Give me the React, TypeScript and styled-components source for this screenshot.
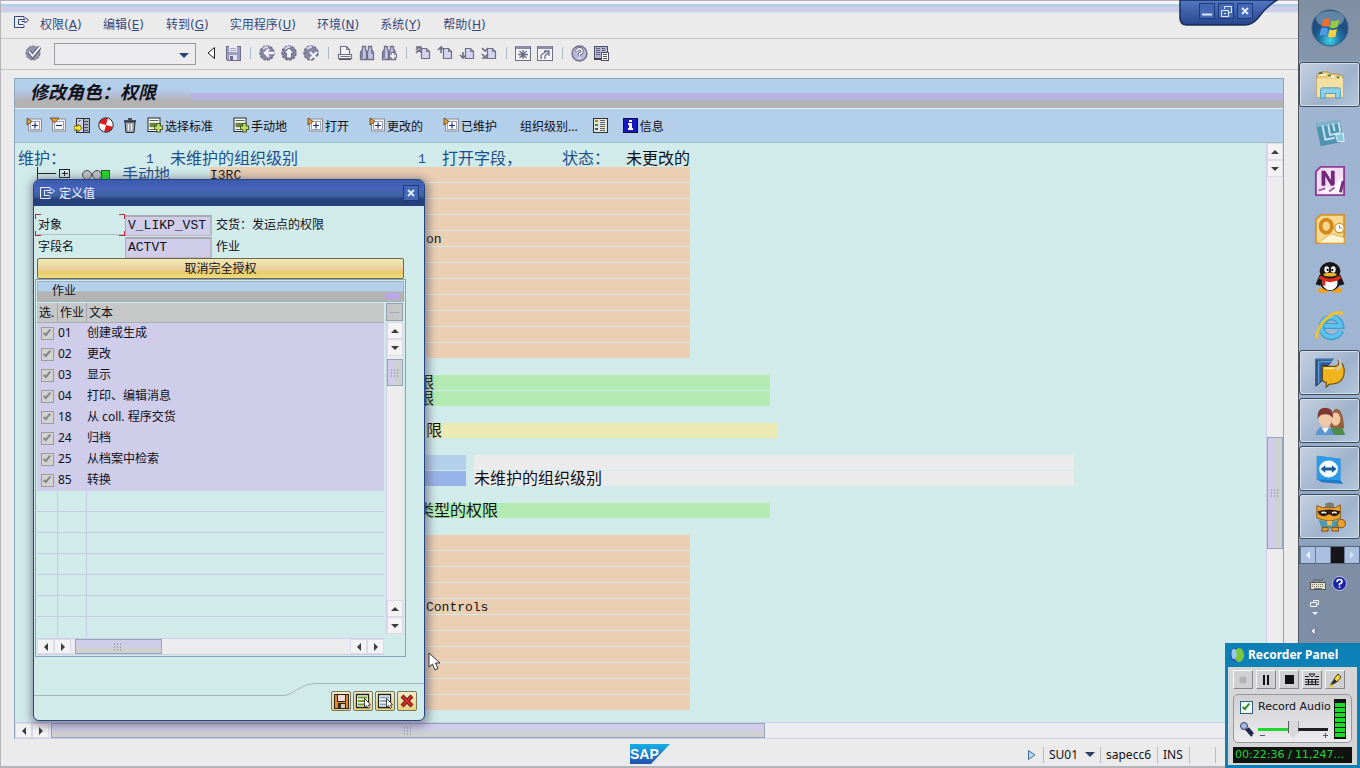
import React from 'react';
import styled, { createGlobalStyle, css } from 'styled-components';

const GlobalStyle = createGlobalStyle`
  *, *::before, *::after { box-sizing: border-box; }
  body {
    margin: 0;
    background: #ebebeb;
    color: #101018;
    font: 12px/16px 'Noto Sans', 'Noto Sans CJK SC', sans-serif;
  }
  button, input, select { font: inherit; color: inherit; margin: 0; }
  button { border: 0; padding: 0; background: none; cursor: default; }
  svg { display: block; flex: none; }
`;

/* ---------- frame ---------- */

const Desktop = styled.div`
  position: relative;
  display: flex;
  min-height: 100vh;
  overflow: hidden;
`;

const Main = styled.main`
  position: relative;
  flex: 1;
  min-width: 0;
  display: flex;
  flex-direction: column;
  background: #ebebeb;
  border-left: 1px solid #b4b4b8;
  border-right: 1px solid #50565e;
  border-bottom: 2px solid #b4b4b8;
`;

const TopStrip = styled.div`
  height: 13px;
  background: linear-gradient(
    #b0b0b6 0 1px, #f4f4f6 1px 4px, #b4cfe8 4px 7px, #cfcde8 7px 12px, #cdeaea 12px 13px
  );
`;

const MenuBar = styled.nav`
  display: flex;
  align-items: center;
  height: 26px;
  padding: 0 0 6px 13px;
  border-bottom: 1px solid #c4c4c6;
  font-family: 'DejaVu Sans', 'Noto Sans CJK SC', sans-serif;
  color: #33497f;
`;

const MenuItems = styled.div`
  display: flex;
  gap: 21px;
  margin: 4px 0 0 10px;
`;

const MenuButton = styled.button`
  min-width: 42px;
  text-align: left;
  white-space: nowrap;
`;

const SystemBar = styled.div`
  display: flex;
  align-items: center;
  height: 31px;
  padding: 0 0 2px 21px;
  border-bottom: 1px solid #c4c4c6;
`;

const IconButton = styled.button<{ $w?: number }>`
  display: flex;
  justify-content: center;
  align-items: center;
  width: ${(p) => p.$w ?? 22}px;
  height: 22px;
`;

const Divider = styled.span`
  width: 12px;
  height: 12px;
  background: linear-gradient(#a9bac6, #a9bac6) center / 1px 100% no-repeat;
`;

const CommandBox = styled.div`
  display: flex;
  width: 142px;
  height: 22px;
  margin: 2px 4px 0 10px;
  border: 1px solid #9a9a9c;
  background: #ececee;
  input { flex: 1; min-width: 0; border: 0; background: none; }
`;

/* ---------- work area ---------- */

const Work = styled.section`
  flex: 1;
  display: flex;
  flex-direction: column;
  margin: 8px 14px 0 13px;
  border: 1px solid #8fa3ba;
  border-bottom: 0;
`;

const Title = styled.h1`
  margin: 0;
  height: 30px;
  padding-left: 15px;
  font-size: 18px;
  line-height: 26px;
  font-weight: 700;
  font-style: italic;
  border-bottom: 1px solid #dff0f4;
  background:
    linear-gradient(#b3d0ea 0 10px, #b6bcd8 16px, #b3b3b3 21px) left / 176px 100% no-repeat,
    linear-gradient(#b3d0ea 0 14px, #b8b2e2 14px 21px, #b3b3b3 21px);
`;

const AppBar = styled.div`
  display: flex;
  align-items: center;
  height: 34px;
  padding: 0 0 2px 7px;
  background: #b3cfea;
  border-bottom: 1px solid #9fc0c4;
`;

const Labelled = styled.div`
  display: flex;
  gap: 20px;
  margin-left: 5px;
`;

const TextButton = styled.button`
  display: flex;
  align-items: center;
  gap: 2px;
  height: 22px;
  white-space: nowrap;
  span { padding-top: 4px; }
  span:only-child { padding-left: 3px; }
`;

const Body = styled.div`
  flex: 1;
  display: flex;
  background: #d0ebea;
`;

const List = styled.div`
  flex: 1;
  min-width: 0;
  padding: 8px 0 11px 3px;
  overflow: hidden;
`;

const Line = styled.div`
  display: flex;
  height: 16px;
`;

/* One list cell; widths and starts count half-width columns of 8px. */
const Cell = styled.span<{ $skip?: number; $cols: number; $bg?: string; $blue?: boolean }>`
  flex: none;
  height: 15px;
  margin-left: ${(p) => (p.$skip ?? 0) * 8}px;
  width: ${(p) => p.$cols * 8}px;
  background: ${(p) => p.$bg ?? 'transparent'};
  color: ${(p) => (p.$blue ? '#1f4f8c' : '#101018')};
  font: 16px/13px 'Noto Sans CJK SC', sans-serif;
  white-space: pre;
`;

const Mono = styled.span`
  font: 13px/17px 'Liberation Mono', monospace;
  display: block;
`;

/* ---------- scroll bars ---------- */

const Bar = styled.div<{ $vertical?: boolean }>`
  display: flex;
  flex-direction: ${(p) => (p.$vertical ? 'column' : 'row')};
  ${(p) => (p.$vertical ? 'width: 17px;' : 'height: 17px;')}
  background: #ececee;
  border: solid #cfcde8;
  border-width: ${(p) => (p.$vertical ? '0 0 0 1px' : '1px 0 1px 0')};
`;

const ArrowButton = styled.button`
  flex: none;
  display: flex;
  align-items: center;
  justify-content: center;
  width: 17px;
  height: 17px;
  max-width: 100%;
  max-height: 100%;
  background: #f3f3f4;
  border: 1px solid #dcdae8;
`;

const Thumb = styled.div<{ $vertical?: boolean; $size: number }>`
  flex: none;
  display: flex;
  align-items: center;
  justify-content: center;
  border: 1px solid #93a5b8;
  ${(p) =>
    p.$vertical
      ? css`height: ${p.$size}px; background: linear-gradient(90deg, #cfcdea 0 45%, #d0d0d0 60%);`
      : css`width: ${p.$size}px; background: linear-gradient(#cfcdea 0 45%, #d0d0d0 70%);`}
`;

const Space = styled.div<{ $size?: number }>`
  ${(p) => (p.$size === undefined ? 'flex: 1;' : `flex: 0 0 ${p.$size}px;`)}
`;

/* ---------- status bar ---------- */

const StatusBar = styled.footer`
  display: grid;
  grid-template-columns: 1fr auto 1fr;
  align-items: center;
  height: 27px;
  padding-top: 2px;
`;

const StatusRight = styled.div`
  display: flex;
  justify-content: flex-end;
  align-items: center;
  padding: 2px 57px 0 0;
`;

const StatusCell = styled.div<{ $w: number }>`
  display: flex;
  align-items: center;
  justify-content: space-between;
  width: ${(p) => p.$w}px;
  height: 16px;
  padding: 0 5px;
  border-left: 1px solid #bcbcc0;
`;

/* ---------- window controls ---------- */

const WindowTab = styled.div`
  position: absolute;
  top: 0;
  right: 19px;
  width: 100px;
  height: 28px;
`;

const WindowButtons = styled.div`
  position: absolute;
  top: 3px;
  left: 20px;
  display: flex;
  gap: 3px;
`;

const WindowButton = styled.button`
  display: flex;
  align-items: center;
  justify-content: center;
  width: 16px;
  height: 16px;
  border: 1px solid #1d3a7c;
  background: #4468b4;
`;

/* ---------- dialog ---------- */

const Dialog = styled.section`
  position: absolute;
  left: 32px;
  top: 179px;
  width: 392px;
  background: #d0ebea;
  border: 1px solid #26457f;
  border-radius: 7px 7px 6px 6px;
  box-shadow: 1px 2px 8px 3px rgba(90, 84, 110, 0.6);
`;

const DialogTitle = styled.header`
  display: flex;
  align-items: center;
  gap: 3px;
  height: 26px;
  padding: 0 5px 0 6px;
  border-radius: 5px 5px 0 0;
  background: linear-gradient(#3a5cae, #4863bb 35%, #3d63a0 60%, #26407e 75%);
  color: #f2f5fc;
  h2 { flex: 1; margin: 0; padding-top: 2px; font-size: 12px; font-weight: 400; }
`;

const Fields = styled.div`
  padding: 8px 0 0 1px;
`;

const FieldRow = styled.div`
  display: flex;
  align-items: center;
  height: 22px;
  input {
    width: 87px;
    height: 21px;
    margin-right: 4px;
    padding: 0 2px;
    border: 2px solid;
    border-color: #a9a9b4 #b8b6c6 #b8b6c6 #a9a9b4;
    border-width: 2px 2px 1px 1px;
    background: #cfcde9;
    font: 13px/17px 'Liberation Mono', monospace;
  }
`;

const FieldLabel = styled.label<{ $active?: boolean }>`
  width: 90px;
  height: 22px;
  padding: 2px 0 0 3px;
  line-height: 18px;
  ${(p) =>
    p.$active &&
    css`
      background:
        linear-gradient(#b22a34, #b22a34) 0 0 / 6px 1px, linear-gradient(#b22a34, #b22a34) 0 0 / 1px 5px,
        linear-gradient(#b22a34, #b22a34) 100% 0 / 6px 1px, linear-gradient(#b22a34, #b22a34) 100% 0 / 1px 5px,
        linear-gradient(#b22a34, #b22a34) 0 100% / 6px 1px, linear-gradient(#b22a34, #b22a34) 0 100% / 1px 5px,
        linear-gradient(#b22a34, #b22a34) 100% 100% / 6px 1px, linear-gradient(#b22a34, #b22a34) 100% 100% / 1px 5px,
        linear-gradient(#b4c0c4, #b4c0c4) 0 95% / 100% 1px;
      background-repeat: no-repeat;
    `}
`;

const WideButton = styled.button`
  display: block;
  width: calc(100% - 23px);
  height: 21px;
  margin-left: 3px;
  border: 1px solid #6c6650;
  border-radius: 2px;
  background: linear-gradient(#f0e9b0, #ecdba4 35%, #eccfa4 50%, #e8cc68 70%, #eedc82);
  line-height: 20px;
`;

const Group = styled.div`
  margin: 0 18px 0 1px;
  padding: 1px;
  border: 1px solid #86a4bf;
`;

const GroupTitle = styled.h3`
  margin: 0 0 1px;
  height: 21px;
  padding-left: 14px;
  border: 1px solid #9db0c6;
  font-size: 12px;
  font-weight: 400;
  line-height: 18px;
  background:
    linear-gradient(#b8a8ea, #b8a8ea) right 3px bottom 2px / 14px 6px no-repeat,
    linear-gradient(#b3cfea 0 9px, #b3b3b3 10px);
`;

const GridRow = styled.div`
  display: flex;
  gap: 2px;
`;

const Grid = styled.table`
  flex: 1;
  border-spacing: 0;
  table-layout: fixed;
  th, td { height: 21px; padding: 0; font-weight: 400; text-align: left; white-space: nowrap; }
  th { height: 20px; padding-left: 2px; background: #c6c8c8; border-bottom: 1px solid #a9acb2; }
  th + th { border-left: 1px solid #a4a4b0; }
  tbody td { border-bottom: 1px solid #c9cbe4; }
  tbody td + td { border-left: 1px solid #c9cbe4; }
  tbody tr:last-child td { border-bottom-color: transparent; }
  tbody tr.filled td { background: #cfcde9; border-color: #cfcde9; }
`;

const Tick = styled.input.attrs({ type: 'checkbox' })<{ $live?: boolean }>`
  appearance: none;
  display: block;
  flex: none;
  width: 13px;
  height: 13px;
  border: 1px solid ${(p) => (p.$live ? '#2c5f84' : '#9a9aa0')};
  background-color: ${(p) => (p.$live ? '#f4f6f0' : '#d2d2ce')};
  position: relative;
  &:checked::after {
    content: '';
    position: absolute;
    left: 3px;
    top: 0;
    width: 4px;
    height: 8px;
    border: solid ${(p) => (p.$live ? '#2f8a2c' : '#84848c')};
    border-width: 0 2px 2px 0;
    transform: rotate(40deg);
  }
`;

const TickCell = styled.td`
  input { margin-left: 4px; }
`;

const Corner = styled.button`
  height: 18px;
  margin-bottom: 1px;
  border: 1px solid #9a9ab0;
  background: linear-gradient(#a8a8b4, #a8a8b4) center / 9px 1px no-repeat #c6c8c8;
`;

const SideBar = styled.div`
  display: flex;
  flex-direction: column;
  width: 17px;
  margin-right: 1px;
  padding-bottom: 4px;
  > :last-child { flex: 1; }
`;

const GroupFoot = styled.div`
  padding-right: 20px;
`;

const DialogFooter = styled.footer`
  display: flex;
  height: 37px;
  margin-top: 26px;
`;

const FootLine = styled.div`
  flex: 1;
  height: 13px;
  border-bottom: 1px solid #a9b4ba;
`;

const FootActions = styled.div`
  display: flex;
  gap: 2px;
  padding: 7px 7px 0 16px;
  border-top: 1px solid #a9b4ba;
`;

const GoldButton = styled.button`
  display: flex;
  align-items: center;
  justify-content: center;
  width: 20px;
  height: 20px;
  border: 1px solid #77765e;
  border-radius: 2px;
  background: linear-gradient(#f3ecc4, #e8d27c);
`;

const Pointer = styled.svg`
  position: absolute;
  left: 427px;
  top: 652px;
`;

/* ---------- task bar ---------- */

const TaskBar = styled.aside`
  display: flex;
  flex-direction: column;
  width: 61px;
  background: linear-gradient(#7f8fa4 0, #8496ac 61px, #9fb4d0 62px, #a0b5d1 340px, #90a4c0 540px, #7e8ea4 566px);
`;

const StartSlot = styled.div`
  display: flex;
  justify-content: center;
  align-items: flex-start;
  height: 62px;
  padding-top: 9px;
`;

const TaskButton = styled.button<{ $open?: boolean }>`
  display: flex;
  align-items: center;
  justify-content: center;
  height: 45px;
  margin-bottom: 3px;
  border: 1px solid transparent;
  border-radius: 3px;
  ${(p) =>
    p.$open &&
    css`
      border-color: #3c4c60;
      box-shadow: inset 0 0 0 1px #d5e0ec;
      background: linear-gradient(135deg, #c4d0e0, #9fb2cc 60%, #b4c8dc);
    `}
`;

const Pager = styled.div`
  display: flex;
  height: 18px;
  margin: 4px 0 12px;
  border: 1px solid #566478;
  background: #a9c0e0;
`;

const PagerCell = styled.button<{ $dark?: boolean }>`
  flex: 1;
  display: flex;
  align-items: center;
  justify-content: center;
  border-left: 1px solid #6c7a90;
  background: ${(p) => (p.$dark ? '#15151a' : 'transparent')};
`;

const Tray = styled.div`
  display: flex;
  flex-direction: column;
  gap: 8px;
  padding-left: 11px;
  > div { display: flex; align-items: center; gap: 6px; }
`;

/* ---------- recorder ---------- */

const Recorder = styled.section`
  position: absolute;
  right: 0;
  bottom: 0;
  width: 135px;
  padding: 0 3px 3px;
  background: #0d80b6;
  h2 {
    display: flex;
    align-items: center;
    gap: 2px;
    height: 24px;
    margin: 0;
    padding-left: 1px;
    color: #fff;
    font: 700 12px/24px 'Noto Sans', sans-serif;
    white-space: nowrap;
  }
`;

const RecorderBody = styled.div`
  padding: 3px 5px 2px;
  background: #d6d6d8;
  font-family: 'DejaVu Sans', sans-serif;
  font-size: 11px;
`;

const RecorderButtons = styled.div`
  display: flex;
  gap: 3px;
  button {
    display: flex;
    align-items: center;
    justify-content: center;
    width: 20px;
    height: 19px;
    border: 1px solid;
    border-color: #f6f6f8 #88888c #88888c #f6f6f8;
    background: #d0d0d2;
  }
`;

const AudioBox = styled.div`
  display: flex;
  justify-content: space-between;
  height: 49px;
  margin: 5px 0 4px;
  padding: 4px 5px 4px 6px;
  border: 1px solid #98989c;
  border-radius: 5px;
  background: linear-gradient(#d0d0d2, #ececee);
`;

const AudioLeft = styled.div`
  display: flex;
  flex-direction: column;
  gap: 6px;
  label { display: flex; align-items: center; gap: 5px; height: 16px; white-space: nowrap; }
  div { display: flex; align-items: center; gap: 4px; }
`;

const Volume = styled.input.attrs({ type: 'range' })`
  appearance: none;
  width: 70px;
  height: 17px;
  background:
    linear-gradient(90deg, #1fd62c 50%, #202024 50%) center / 100% 3px no-repeat,
    linear-gradient(#55555a, #55555a) 2px 14px / 5px 1px no-repeat,
    linear-gradient(#55555a, #55555a) 65px 14px / 5px 1px no-repeat,
    linear-gradient(#55555a, #55555a) 67px 12px / 1px 5px no-repeat;
  &::-webkit-slider-thumb {
    appearance: none;
    width: 11px;
    height: 17px;
    background: linear-gradient(90deg, #5c5c60 0 1px, #d8d8dc 1px 10px, #5c5c60 10px);
    clip-path: polygon(0 0, 100% 0, 100% 65%, 50% 100%, 0 65%);
  }
`;

const Meter = styled.div`
  width: 12px;
  height: 40px;
  border: 1px solid #101010;
  background: repeating-linear-gradient(#101010 0 1px, #18dc28 1px 5px);
  border-top-width: 3px;
`;

const Clock = styled.output`
  display: block;
  height: 16px;
  padding-left: 2px;
  overflow: hidden;
  background: #101210;
  color: #22d43a;
  line-height: 16px;
  white-space: nowrap;
`;

/* ---------- icons ---------- */

const Tri = ({ dir, size = 4, fill = '#3c3c44' }: { dir: 'up' | 'down' | 'left' | 'right'; size?: number; fill?: string }) => {
  const s = size;
  const shape = {
    up: { w: s * 2, h: s, d: `M0 ${s}L${s} 0L${s * 2} ${s}Z` },
    down: { w: s * 2, h: s, d: `M0 0L${s} ${s}L${s * 2} 0Z` },
    left: { w: s, h: s * 2, d: `M${s} 0L0 ${s}L${s} ${s * 2}Z` },
    right: { w: s, h: s * 2, d: `M0 0L${s} ${s}L0 ${s * 2}Z` },
  }[dir];
  return (
    <svg width={shape.w} height={shape.h}>
      <path d={shape.d} fill={fill} />
    </svg>
  );
};

const Grip = () => (
  <svg width="9" height="8" fill="#a4a4b8">
    {[0, 3, 6].map((x) => [0, 3, 6].map((y) => <rect key={`${x}${y}`} x={x} y={y} width="1" height="2" />))}
  </svg>
);

const MenuGlyph = ({ color = '#2f4478' }) => (
  <svg width="16" height="13" fill="none" stroke={color}>
    <path d="M10 2.500V.5H.5V11.500H10V9.500M4.500 3.500H11M11 1.500L14.500 4L11 7V5.500H7.500M4.500 3.500V8.500H9.500" />
  </svg>
);

const ink = '#6f6f88';
const tint = '#c3c3e4';

const Svg = ({ children, size = 16, sharp }: { children: React.ReactNode; size?: number; sharp?: boolean }) => (
  <svg width={size} height={size} viewBox="0 0 16 16" shapeRendering={sharp ? 'crispEdges' : undefined} fill="none">
    {children}
  </svg>
);

const Disc = ({ children }: { children: React.ReactNode }) => (
  <Svg>
    <circle cx="8" cy="8" r="7" fill="#8686a4" stroke={ink} strokeWidth="1.4" strokeDasharray="3 1" />
    <path d="M4 4A6 6 0 0 1 9 2" stroke="#d4d4ee" strokeWidth="2" />
    {children}
  </Svg>
);

const Binoculars = ({ plus }: { plus?: boolean }) => (
  <Svg>
    <path d="M3.500 1.500H6.500V4L7.500 7.500V14.500H1.500V7.500L3.500 4ZM9.500 1.500H12.500V4L14.500 7.500V14.500H8.500V7.500L9.500 4Z" fill={tint} stroke={ink} strokeWidth="1.3" />
    <path d="M7 6.500H9M3 5V13M13 5V9" stroke={ink} strokeWidth="1.500" />
    {plus && <path d="M12 7V15M8 11H16" stroke={ink} strokeWidth="4" />}
    {plus && <path d="M12 8V14M9 11H15" stroke="#ededfa" strokeWidth="2.400" />}
  </Svg>
);

const PageIcon = ({ d }: { d: string }) => (
  <Svg>
    <path d="M6.500 3.500H11.500L14.500 6.500V13.500H6.500Z" fill="#d4d4f0" stroke={ink} strokeWidth="1.2" />
    <path d="M11.500 3.500V6.500H14.500" stroke={ink} />
    <path d={d} stroke={ink} strokeWidth="1.600" />
  </Svg>
);

const WindowIcon = ({ d }: { d: string }) => (
  <Svg sharp>
    <rect x="0.500" y="1.500" width="15" height="14" fill="#f4f4f8" stroke={ink} />
    <rect x="1" y="1" width="14" height="3" fill="#8c8ca6" />
    <path d={d} stroke={ink} strokeWidth="1.300" shapeRendering="auto" />
  </Svg>
);

const CheckIcon = () => (
  <Svg>
    <circle cx="8" cy="8" r="7" fill="#9494b0" stroke={ink} strokeDasharray="3 1" />
    <path d="M4 6.500L7.500 11L15 2" stroke="#55556c" strokeWidth="4" />
    <path d="M4 6.500L7.500 11L15 2" stroke="#f0f0fa" strokeWidth="2" />
  </Svg>
);

const SaveGrey = () => (
  <Svg sharp>
    <path d="M1 1H15V15H2L1 14Z" fill="#9c9cc4" stroke={ink} />
    <rect x="4" y="1" width="8" height="6" fill="#ececf6" />
    <path d="M5 3H11M5 5H11" stroke="#a4a4bc" />
    <rect x="4" y="10" width="8" height="5" fill="#e2e2ee" />
    <rect x="5" y="11" width="3" height="4" fill={ink} />
  </Svg>
);

const PrintIcon = () => (
  <Svg>
    <path d="M3.500 9V1.500H9.500L12.500 4.500V9" fill="#f2f2f8" stroke={ink} strokeWidth="1.200" />
    <path d="M9.500 1.500V4.500H12.500" stroke={ink} />
    <path d="M1.500 9.500H14.500V13.500H1.500ZM3.500 11.500H13" fill="#f2f2f8" stroke={ink} strokeWidth="1.200" />
    <path d="M2 14.500H14" stroke="#4e4e60" />
  </Svg>
);

const HelpIcon = () => (
  <Svg size={17}>
    <circle cx="8" cy="8" r="7" fill="#b8b8dc" stroke={ink} strokeWidth="1.300" />
    <path d="M5.500 6Q5.500 3.500 8 3.500T10.500 6Q10.500 7.500 8 8.500V10" stroke="#4c4c6c" strokeWidth="2.600" />
    <path d="M5.500 6Q5.500 3.500 8 3.500T10.500 6Q10.500 7.500 8 8.500V10M8 11.500V13" stroke="#fff" strokeWidth="1.400" />
  </Svg>
);

const LayoutIcon = () => (
  <Svg sharp>
    <rect x="1" y="1" width="13" height="12" fill="#b4b4d4" stroke="#505064" />
    <path d="M3 3H7M3 5H7M3 7H7M3 9H7M9 3H12M9 5H12" stroke="#5c5c78" />
    <path d="M1 13.500H9" stroke="#404050" strokeWidth="2" />
    <rect x="8" y="7" width="7" height="8" fill="#fff" stroke="#505064" />
    <path d="M10 9.500H14M10 11.500H14M10 13.500H14" stroke="#505064" />
  </Svg>
);

const NodeIcon = ({ collapse }: { collapse?: boolean }) => (
  <Svg>
    <rect x="2.500" y="2" width="13" height="12" fill="#f2f2f4" stroke="#8c8c90" />
    <rect x="4.500" y="4.500" width="9" height="8" fill="#fff" stroke="#98a0c0" />
    <path d={collapse ? 'M6 8.500H12' : 'M6 8.500H12M9 5.500V11.500'} stroke="#22307c" strokeWidth="1.200" />
    <path d={collapse ? 'M0 1H9L4.500 6Z' : 'M1 1V8L6 4.500Z'} fill="#f09a2c" stroke="#50402c" strokeWidth=".8" />
  </Svg>
);

const InsertIcon = () => (
  <Svg sharp>
    <rect x="2" y="1" width="13" height="14" fill="#cfd6e2" stroke="#2c3038" />
    <rect x="9" y="1" width="6" height="14" fill="#a7afc0" stroke="#2c3038" />
    <path d="M10 4H14M10 7H14M10 10H14M10 13H14" stroke="#4c525c" />
    <path d="M4 5L7 3M4 8H7" stroke="#707888" />
    <path d="M0 9H4V7L8 11L4 15V13H0Z" fill="#f4e33c" stroke="#6c6418" shapeRendering="auto" />
  </Svg>
);

const BallIcon = () => (
  <Svg>
    <circle cx="8" cy="8" r="7.200" fill="#fff" />
    <path d="M8 8V1A7 7 0 0 0 1 8ZM8 8V15A7 7 0 0 0 15 8Z" fill="#e01820" transform="rotate(15 8 8)" />
    <circle cx="8" cy="8" r="7.200" stroke="#30262a" />
  </Svg>
);

const TrashIcon = () => (
  <Svg>
    <path d="M3 5H13L12 15.500H4Z" fill="#a4a8b0" stroke="#202428" />
    <path d="M6.500 7V13.500M9.500 7V13.500" stroke="#e8eaec" strokeWidth="1.200" />
    <path d="M2 4H14M6 2H10" stroke="#202428" strokeWidth="1.600" />
  </Svg>
);

const ListPlus = () => (
  <Svg>
    <rect x="1" y="1" width="12" height="13.500" fill="#fff" stroke="#202820" />
    <path d="M2.500 3.500H11.500M2.500 12.500H8" stroke="#586858" />
    <path d="M2.500 8H11.500" stroke="#66843a" strokeWidth="4.500" />
    <path d="M11.500 6V15.500M7 10.700H16" stroke="#4a5c20" strokeWidth="4.400" />
    <path d="M11.500 7V14.500M8 10.700H15" stroke="#c2e070" strokeWidth="2.400" />
  </Svg>
);

const LegendIcon = () => (
  <Svg sharp>
    <rect x="1" y="1" width="14" height="14" fill="#e4e6dc" stroke="#303030" />
    <path d="M3 4H6" stroke="#a88c30" strokeWidth="2" />
    <path d="M3 8H6" stroke="#3c8c3c" strokeWidth="2" />
    <path d="M3 12H6" stroke="#50545c" strokeWidth="2" />
    <path d="M8 3.500H13M8 5.500H13M8 7.500H13M8 9.500H13M8 11.500H13M8 13.500H13" stroke="#606468" />
  </Svg>
);

const InfoIcon = () => (
  <Svg sharp>
    <rect x="1" y="1" width="14" height="14" fill="#1818c0" stroke="#101030" />
    <path d="M7 3H10V5H7ZM6 6H10V11H11V13H6V11H7V8H6Z" fill="#fff" />
  </Svg>
);

const DiskIcon = () => (
  <Svg sharp>
    <path d="M1 1H15V15H1Z" fill="#e08c28" stroke="#302418" />
    <rect x="4" y="1" width="8" height="7" fill="#f0dcdc" stroke="#302418" />
    <rect x="5" y="10" width="7" height="5" fill="#d8c8c8" stroke="#302418" />
    <rect x="6" y="11" width="2" height="4" fill="#402c28" />
  </Svg>
);

const PickIcon = ({ color }: { color: string }) => (
  <Svg>
    <path d="M1.500 1.500H13.500V14.500H1.500Z" fill="#fff" stroke="#202420" strokeWidth="1.300" />
    <path d="M3 4.500H12M3 8H12M3 11.500H10" stroke={color} strokeWidth="2" />
    <path d="M9.500 5.500V14L11.500 12.500L13 15.500L14.500 14.500L13.500 12L15.500 11.500Z" fill="#fff" stroke="#202020" strokeWidth=".8" />
  </Svg>
);

const CancelIcon = () => (
  <Svg>
    <path d="M3 3L13 13M13 3L3 13" stroke="#5c1414" strokeWidth="4" />
    <path d="M3.500 3.500L12.500 12.500M12.500 3.500L3.500 12.500" stroke="#dc2c2c" strokeWidth="2.200" />
  </Svg>
);

const TreeMark = () => (
  <svg width="96" height="16" fill="none" stroke="#202028" shapeRendering="crispEdges">
    <path d="M19.500 0V16M19.500 6.500H38M41.500 2.500H51.500V10.500H41.500ZM44 6.500H50M46.500 4V9" />
    <g shapeRendering="auto" stroke="#44484c">
      <circle cx="69" cy="8" r="4.500" fill="#c0c4c4" />
      <circle cx="79" cy="8" r="4.500" fill="#c0c4c4" />
      <rect x="83.500" y="3.500" width="8" height="9" fill="#18e020" />
    </g>
  </svg>
);

const SapLogo = () => (
  <svg width="40" height="20">
    <defs>
      <linearGradient id="sap" x2="0" y2="1">
        <stop offset="0" stopColor="#12b0e4" />
        <stop offset="1" stopColor="#2450b0" />
      </linearGradient>
    </defs>
    <path d="M0 0H40L21 20H0Z" fill="url(#sap)" />
    <text x="0" y="15" fill="#fff" fontFamily="Liberation Sans" fontWeight="700" fontSize="14">SAP</text>
  </svg>
);

const StartOrb = () => (
  <svg width="38" height="38" viewBox="0 0 38 38">
    <defs>
      <radialGradient id="orb" cy=".85">
        <stop offset="0" stopColor="#3fd6e6" />
        <stop offset=".55" stopColor="#2277a8" />
        <stop offset="1" stopColor="#1f4f80" />
      </radialGradient>
    </defs>
    <circle cx="19" cy="19" r="18" fill="url(#orb)" stroke="#3a5f80" />
    <ellipse cx="19" cy="10" rx="14" ry="8" fill="#fff" opacity=".3" />
    <path d="M12 11Q16 8 19 10.500L17.500 18Q14 16 10.500 18Z" fill="#ee6c2c" />
    <path d="M20.500 11.500Q24 13 28.500 10.500L26.500 18Q22.500 20 19 18.500Z" fill="#98cc3c" />
    <path d="M10 19.500Q14 17.500 17 20L15.500 27Q12 25 8.500 27Z" fill="#4c9ce8" />
    <path d="M18.500 20.500Q22 22 26 20L24.500 27.500Q20.500 29.500 17 27.500Z" fill="#fcd03c" />
  </svg>
);

const Task = ({ children }: { children: React.ReactNode }) => (
  <svg width="32" height="32" viewBox="0 0 34 34" fill="none">{children}</svg>
);

const FolderArt = () => (
  <Task>
    <path d="M3 6L8 3H15L17 5H24L31 8V30H3Z" fill="#e4c878" stroke="#b4944c" />
    <path d="M5 6H13M15 8H22M23 9H29" stroke="#fff8e0" strokeWidth="2" />
    <path d="M5 5L9 4M15 7H18M24 9H27" stroke="#5c6434" strokeWidth="2" />
    <rect x="3" y="10" width="28" height="20" fill="#f4e0a0" />
    <path d="M7 31V22Q7 20 9 20H26Q28 20 28 22V31H23V26H12V31Z" fill="#8ed0ec" stroke="#4a9cc4" />
  </Task>
);

const LyncArt = () => (
  <Task>
    <path d="M2 7L27 3L32 26L7 31Z" fill="#4f93b0" />
    <path d="M2 7L27 3L28 7L3 11Z" fill="#7fb4c8" />
    <path d="M9 9L12 24L22 22M15 8L17 19L28 17M20 7L22 15M26 6L28 16" stroke="#c4e6f0" strokeWidth="2" />
    <path d="M23 19L31 17L32 26L25 26Z" fill="#8ac8dc" stroke="#e0f4f8" />
  </Task>
);

const OneNoteArt = () => (
  <Task>
    <path d="M7 2H32V32H2V7Z" fill="#f4dcf4" stroke="#8c3c94" strokeWidth="2" />
    <path d="M8 22V6H12L18 16V6H22V22H18L12 12V22Z" fill="#702878" />
    <path d="M19 24L30 12V30H8L7 25Z" fill="#fff" opacity=".8" />
    <path d="M28 29L31 17" stroke="#702878" strokeWidth="3" />
    <path d="M5 27L12 25M16 28L22 24" stroke="#a45cac" strokeWidth="2" />
  </Task>
);

const OutlookArt = () => (
  <Task>
    <path d="M7 2H32V32H2V7Z" fill="#f6d890" stroke="#d09428" strokeWidth="2" />
    <ellipse cx="13" cy="14" rx="6" ry="7" stroke="#d48818" strokeWidth="4" />
    <circle cx="27" cy="16" r="5" fill="#fff" stroke="#d09c30" strokeWidth="1.500" />
    <path d="M27 13V16H30" stroke="#a87820" />
    <path d="M5 31L18 22L32 26V32H5Z" fill="#fff4d0" stroke="#e0ac48" />
  </Task>
);

const QQArt = () => (
  <Task>
    <ellipse cx="10" cy="31" rx="6" ry="3" fill="#f0a020" />
    <ellipse cx="24" cy="31" rx="6" ry="3" fill="#f0a020" />
    <path d="M7 15L3 24L6 25ZM27 15L31 24L28 25Z" fill="#181818" stroke="#181818" strokeWidth="2" />
    <ellipse cx="17" cy="21" rx="11" ry="11" fill="#181818" />
    <ellipse cx="17" cy="23" rx="8" ry="8" fill="#fff" />
    <ellipse cx="17" cy="11" rx="11" ry="10" fill="#181818" />
    <ellipse cx="13.500" cy="9" rx="2.500" ry="3.500" fill="#fff" />
    <ellipse cx="20.500" cy="9" rx="2.500" ry="3.500" fill="#fff" />
    <circle cx="14.500" cy="9.500" r="1.200" fill="#000" />
    <circle cx="19.500" cy="9.500" r="1.200" fill="#000" />
    <ellipse cx="17" cy="14.500" rx="7" ry="2" fill="#f4b428" />
    <path d="M6 17Q17 24 28 17" stroke="#d82c20" strokeWidth="4" />
    <path d="M9 19V26H12V20" fill="#d82c20" />
  </Task>
);

const IEArt = () => (
  <Task>
    <path d="M29 23Q26 30 18 30A10.500 10.500 0 1 1 29 18H11" stroke="#3e9cd0" strokeWidth="6.500" />
    <path d="M28.500 23Q26 29.500 18 29.500A10.500 10.500 0 1 1 28.500 18H11" stroke="#5cc4ec" strokeWidth="4" />
    <path d="M4 31C1 28 6 16 15 9S30 3 30 6" stroke="#f0c030" strokeWidth="3" />
  </Task>
);

const SapArt = () => (
  <Task>
    <path d="M2 2H21L15 9H9V25L2 31Z" fill="#2e5f9c" stroke="#1c3048" />
    <path d="M2 2H21L19 5H5V28" stroke="#7cb0e0" />
    <path d="M9 10H22Q28 9 26 4Q33 8 32 17Q31 29 16 29L13 32V27Q10 27 9 24Z" fill="#f0b41c" stroke="#6c4c10" strokeWidth="1.200" />
    <path d="M11 12H22" stroke="#fce48c" strokeWidth="2" />
    <path d="M24 14Q31 9 27 3" stroke="#c8ccd0" strokeWidth="2.400" />
  </Task>
);

const PeopleArt = () => (
  <Task>
    <path d="M16 32Q17 22 24 22T33 32Z" fill="#4c8c50" />
    <path d="M17 24Q18 4 24 4Q31 5 32 25Z" fill="#98603c" />
    <ellipse cx="23" cy="15" rx="5" ry="7" fill="#f0c8a4" />
    <path d="M2 32Q3 23 11 23T21 32Z" fill="#5c94cc" />
    <path d="M8 24L12 30L16 24Z" fill="#fff" />
    <ellipse cx="12" cy="15" rx="7" ry="9" fill="#f0c8a8" />
    <path d="M4 15Q3 3 12 3T20 14Q17 9 10 10Q6 10 4 15Z" fill="#7c3830" />
  </Task>
);

const TeamViewerArt = () => (
  <Task>
    <path d="M3 3L28 6V29L31 33L8 31L3 28Z" fill="#1c7cc8" />
    <path d="M3 3L28 6V29L3 28Z" fill="#2c9ae4" />
    <ellipse cx="15.500" cy="17" rx="10" ry="9" fill="#f4fafe" />
    <path d="M7 17L12 13V15.500H19V13L24 17L19 21V18.500H12V21Z" fill="#1c5c98" />
  </Task>
);

const CatArt = () => (
  <Task>
    <path d="M12 3Q17 0 21 3V7H12Z" fill="#787c70" />
    <path d="M3 5L9 7H23L28 4V18Q17 24 3 18Z" fill="#f0a428" stroke="#8c5414" />
    <path d="M4 11Q16 7 28 11Q26 17 20 16L16 14L12 16Q5 17 4 11Z" fill="#2c1c14" />
    <path d="M8 13Q10 11 13 13M19 13Q22 11 24 13" stroke="#fff" strokeWidth="1.500" />
    <path d="M5 20Q16 24 28 20L26 29H8Z" fill="#4c98ac" />
    <circle cx="29" cy="24" r="4.500" fill="#e8a02c" stroke="#7c4c18" />
    <path d="M9 28H15V32H8ZM19 28H26V32H19Z" fill="#e49c2c" stroke="#7c4c18" />
    <path d="M14 21H19V26H14Z" fill="#f4c048" />
  </Task>
);

/* ---------- data ---------- */

const menus: [string, string][] = [
  ['权限', 'A'], ['编辑', 'E'], ['转到', 'G'], ['实用程序', 'U'], ['环境', 'N'], ['系统', 'Y'], ['帮助', 'H'],
];

const activities: [string, string][] = [
  ['01', '创建或生成'], ['02', '更改'], ['03', '显示'], ['04', '打印、编辑消息'],
  ['18', '从 coll. 程序交货'], ['24', '归档'], ['25', '从档案中检索'], ['85', '转换'],
];

const PEACH = '#eacfb2';
const GREEN = '#b3ebb3';

const Peach = ({ count, at, text }: { count: number; at?: number; text?: string }) => (
  <>
    {Array.from({ length: count }, (_, i) => (
      <Line key={i}>
        <Cell $skip={24} $cols={27} $bg={PEACH} />
        <Cell $cols={33} $bg={PEACH}>{i === at && <Mono>{text}</Mono>}</Cell>
      </Line>
    ))}
  </>
);

const Arrow = ({ dir, label }: { dir: 'up' | 'down' | 'left' | 'right'; label: string }) => (
  <ArrowButton aria-label={label}><Tri dir={dir} /></ArrowButton>
);

const AuthList = () => (
  <List>
    <Line>
      <Cell $cols={16} $blue>维护：</Cell>
      <Cell $cols={3} $blue><Mono>1</Mono></Cell>
      <Cell $cols={31} $blue>未维护的组织级别</Cell>
      <Cell $cols={3} $blue><Mono>1</Mono></Cell>
      <Cell $cols={15} $blue>打开字段，</Cell>
      <Cell $cols={8} $blue>状态：</Cell>
      <Cell $cols={8}>未更改的</Cell>
    </Line>
    <Line>
      <Cell $cols={13}><TreeMark /></Cell>
      <Cell $cols={11} $blue>手动地</Cell>
      <Cell $cols={60} $bg={PEACH}><Mono>I3RC</Mono></Cell>
    </Line>
    <Peach count={11} at={3} text="on" />
    <Line />
    <Line><Cell $skip={24} $cols={26} $bg={GREEN} /><Cell $cols={44} $bg={GREEN}>限</Cell></Line>
    <Line><Cell $skip={24} $cols={26} $bg={GREEN} /><Cell $cols={44} $bg={GREEN}>限</Cell></Line>
    <Line />
    <Line><Cell $skip={24} $cols={27} $bg="#eaeab2" /><Cell $cols={44} $bg="#eaeab2">限</Cell></Line>
    <Line />
    <Line><Cell $skip={24} $cols={32} $bg="#b3cfea" /><Cell $skip={1} $cols={75} $bg="#ebebeb" /></Line>
    <Line><Cell $skip={24} $cols={32} $bg="#98b2ea" /><Cell $skip={1} $cols={75} $bg="#ebebeb">未维护的组织级别</Cell></Line>
    <Line />
    <Line><Cell $skip={24} $cols={26} $bg={GREEN} /><Cell $cols={44} $bg={GREEN}>类型的权限</Cell></Line>
    <Line />
    <Peach count={11} at={4} text="Controls" />
  </List>
);

const DefineValues = () => (
  <Dialog role="dialog" aria-labelledby="dialog-title">
    <DialogTitle>
      <MenuGlyph color="#e8eefa" />
      <h2 id="dialog-title">定义值</h2>
      <WindowButton aria-label="关闭">
        <svg width="8" height="8" stroke="#dfe9f8" strokeWidth="2"><path d="M1 1L7 7M7 1L1 7" /></svg>
      </WindowButton>
    </DialogTitle>
    <Fields>
      <FieldRow>
        <FieldLabel htmlFor="object" $active>对象</FieldLabel>
        <input id="object" defaultValue="V_LIKP_VST" />
        <span>交货：发运点的权限</span>
      </FieldRow>
      <FieldRow>
        <FieldLabel htmlFor="field">字段名</FieldLabel>
        <input id="field" defaultValue="ACTVT" />
        <span>作业</span>
      </FieldRow>
    </Fields>
    <WideButton>取消完全授权</WideButton>
    <Group>
      <GroupTitle>作业</GroupTitle>
      <GridRow>
        <Grid>
          <colgroup><col width="20" /><col width="29" /><col /></colgroup>
          <thead><tr><th>选.</th><th>作业</th><th>文本</th></tr></thead>
          <tbody>
            {activities.map(([code, text]) => (
              <tr className="filled" key={code}>
                <TickCell><Tick defaultChecked aria-label={text} /></TickCell>
                <td>{code}</td>
                <td>{text}</td>
              </tr>
            ))}
            {Array.from({ length: 7 }, (_, i) => <tr key={i}><td /><td /><td /></tr>)}
          </tbody>
        </Grid>
        <SideBar>
          <Corner aria-label="表格设置" />
          <Bar $vertical>
            <Arrow dir="up" label="上" />
            <Arrow dir="down" label="下" />
            <Space $size={3} />
            <Thumb $vertical $size={27}><Grip /></Thumb>
            <Space />
            <Arrow dir="up" label="上页" />
            <Arrow dir="down" label="下页" />
          </Bar>
        </SideBar>
      </GridRow>
      <GroupFoot>
        <Bar>
          <Arrow dir="left" label="左" />
          <Arrow dir="right" label="右" />
          <Space $size={4} />
          <Thumb $size={87}><Grip /></Thumb>
          <Space />
          <Arrow dir="left" label="左页" />
          <Arrow dir="right" label="右页" />
        </Bar>
      </GroupFoot>
    </Group>
    <DialogFooter>
      <FootLine />
      <svg width="32" height="14" fill="none" stroke="#a9b4ba"><path d="M0 12.500C10 12.500 18 .5 32 .5" /></svg>
      <FootActions>
        <GoldButton aria-label="保存"><DiskIcon /></GoldButton>
        <GoldButton aria-label="全选"><PickIcon color="#6a9a24" /></GoldButton>
        <GoldButton aria-label="取消全选"><PickIcon color="#8fa4c0" /></GoldButton>
        <GoldButton aria-label="取消"><CancelIcon /></GoldButton>
      </FootActions>
    </DialogFooter>
  </Dialog>
);

const SystemTools = () => (
  <SystemBar>
    <IconButton aria-label="回车"><CheckIcon /></IconButton>
    <CommandBox>
      <input aria-label="命令" />
      <IconButton aria-label="命令历史"><Tri dir="down" size={5} fill="#2c4470" /></IconButton>
    </CommandBox>
    <IconButton aria-label="隐藏">
      <svg width="10" height="14" fill="#fff" stroke="#202024"><path d="M8.500 1.500V12.500L2 7Z" /></svg>
    </IconButton>
    <IconButton aria-label="保存"><SaveGrey /></IconButton>
    <Divider />
    <IconButton aria-label="返回"><Disc><path d="M15 8H7M10 4L6 8L10 12" stroke="#f4f4fc" strokeWidth="2.400" /></Disc></IconButton>
    <IconButton aria-label="退出"><Disc><path d="M8 3L13 8H10.500V13H5.500V8H3Z" fill="#f4f4fc" stroke={ink} /></Disc></IconButton>
    <IconButton aria-label="取消"><Disc><path d="M7 7L14 14M14 7L7 14" stroke="#f4f4fc" strokeWidth="2.200" /></Disc></IconButton>
    <Divider />
    <IconButton aria-label="打印"><PrintIcon /></IconButton>
    <IconButton aria-label="查找"><Binoculars /></IconButton>
    <IconButton aria-label="继续查找"><Binoculars plus /></IconButton>
    <Divider />
    <IconButton aria-label="首页"><PageIcon d="M1 2H7M1 8L4 5L7 8M1 5L4 2L7 5" /></IconButton>
    <IconButton aria-label="上页"><PageIcon d="M1 5L4 2L7 5M4 2V8" /></IconButton>
    <IconButton aria-label="下页"><PageIcon d="M1 10L4 13L7 10M4 7V13" /></IconButton>
    <IconButton aria-label="末页"><PageIcon d="M1 3L4 6L7 3M1 9L4 12L7 9M1 13H7" /></IconButton>
    <Divider />
    <IconButton aria-label="新建会话"><WindowIcon d="M8 5V14M3 9.500H13M4.500 6L11.500 13M11.500 6L4.500 13" /></IconButton>
    <IconButton aria-label="快捷方式"><WindowIcon d="M4 14V10L10 6M7 6H12V11M8 14V11L12 7" /></IconButton>
    <Divider />
    <IconButton aria-label="帮助"><HelpIcon /></IconButton>
    <IconButton aria-label="布局"><LayoutIcon /></IconButton>
  </SystemBar>
);

const Side = () => (
  <TaskBar>
    <StartSlot><button aria-label="开始"><StartOrb /></button></StartSlot>
    <TaskButton $open aria-label="资源管理器"><FolderArt /></TaskButton>
    <TaskButton aria-label="Lync"><LyncArt /></TaskButton>
    <TaskButton aria-label="OneNote"><OneNoteArt /></TaskButton>
    <TaskButton aria-label="Outlook"><OutlookArt /></TaskButton>
    <TaskButton aria-label="QQ"><QQArt /></TaskButton>
    <TaskButton aria-label="Internet Explorer"><IEArt /></TaskButton>
    <TaskButton $open aria-label="SAP"><SapArt /></TaskButton>
    <TaskButton $open aria-label="会议"><PeopleArt /></TaskButton>
    <TaskButton $open aria-label="TeamViewer"><TeamViewerArt /></TaskButton>
    <TaskButton $open aria-label="助手"><CatArt /></TaskButton>
    <Pager>
      <PagerCell aria-label="前"><Tri dir="left" fill="#eef4fa" /></PagerCell>
      <PagerCell aria-label="1" />
      <PagerCell $dark aria-label="2" />
      <PagerCell aria-label="后"><Tri dir="right" fill="#d4e0ee" /></PagerCell>
    </Pager>
    <Tray>
      <div>
        <svg width="16" height="14"><path d="M3 5Q4 1 8 3T13 1" fill="none" stroke="#5c5c58" /><rect x=".5" y="5.500" width="15" height="7" fill="#e4e0cc" stroke="#5c5c54" /><path d="M2 7.500H14M2 9.500H14" stroke="#77756c" strokeDasharray="1 1" /><path d="M4 11.500H12" stroke="#77756c" /></svg>
        <svg width="15" height="15"><circle cx="7.500" cy="7.500" r="7" fill="#1c28a4" stroke="#c0c8e8" /><path d="M5 6Q5 3.500 7.500 3.500T10 6Q10 7 7.500 8V9.500M7.500 10.500V12" fill="none" stroke="#fff" strokeWidth="1.600" /></svg>
      </div>
      <svg width="9" height="17" fill="none" stroke="#f2f4f8"><path d="M3.500 3.500V1.500H8.500V5.500H6M.5 3.500H6.500V7.500H.5Z" /><path d="M2 13H8L5 16Z" fill="#f2f4f8" stroke="none" /></svg>
      <svg width="6" height="12"><path d="M5 3V11L1 7Z" fill="#f2f4f8" stroke="#505c70" strokeWidth=".6" /></svg>
    </Tray>
  </TaskBar>
);

const RecorderPanel = () => (
  <Recorder>
    <h2>
      <svg width="17" height="17"><circle cx="8" cy="8" r="7" fill="#2858b0" /><ellipse cx="10" cy="8" rx="5" ry="7" fill="#7cc83c" /><ellipse cx="5" cy="7" rx="2.500" ry="5" fill="#9cc4f0" /></svg>
      Recorder Panel
    </h2>
    <RecorderBody>
      <RecorderButtons>
        <button aria-label="Record"><svg width="10" height="10"><circle cx="5" cy="5" r="4" fill="#b4b4b8" stroke="#c8c8cc" /></svg></button>
        <button aria-label="Pause"><svg width="8" height="10"><path d="M1 0H3V10H1ZM5 0H7V10H5Z" fill="#101014" /></svg></button>
        <button aria-label="Stop"><svg width="9" height="9"><rect width="9" height="9" fill="#101014" /></svg></button>
        <button aria-label="Marker"><svg width="14" height="14" fill="none" stroke="#181818"><path d="M0 6.500H14M0 11.500H14M0 9H14M3.500 6V12M7 6V12M10.500 6V12M4 1H10L7 4ZM0 3.500H4M10 3.500H14" /></svg></button>
        <button aria-label="Annotate"><svg width="14" height="14"><path d="M6 6L10 1L13 4L9 9Z" fill="#f4dc20" stroke="#403c10" /><path d="M6 6L9 9L6 11L2 12L4 9Z" fill="#303030" /><path d="M1 13H6" stroke="#e8d020" strokeWidth="2" /></svg></button>
      </RecorderButtons>
      <AudioBox>
        <AudioLeft>
          <label><Tick $live defaultChecked /> Record Audio</label>
          <div>
            <svg width="14" height="16"><circle cx="4" cy="4" r="3.500" fill="#a8b8dc" stroke="#303c68" /><path d="M6 7L12 14M8 6L13 12" stroke="#202850" strokeWidth="2.400" /></svg>
            <Volume aria-label="Volume" defaultValue={50} />
          </div>
        </AudioLeft>
        <Meter />
      </AudioBox>
      <Clock>00:22:36 / 11,247...</Clock>
    </RecorderBody>
  </Recorder>
);

export default function App() {
  return (
    <Desktop>
      <GlobalStyle />
      <Main>
        <TopStrip />
        <MenuBar>
          <MenuGlyph />
          <MenuItems>
            {menus.map(([name, key]) => (
              <MenuButton key={key}>{name}(<u>{key}</u>)</MenuButton>
            ))}
          </MenuItems>
        </MenuBar>
        <SystemTools />
        <Work>
          <Title>修改角色：权限</Title>
          <AppBar>
            <IconButton $w={24} aria-label="展开"><NodeIcon /></IconButton>
            <IconButton $w={24} aria-label="折叠"><NodeIcon collapse /></IconButton>
            <IconButton $w={24} aria-label="插入"><InsertIcon /></IconButton>
            <IconButton $w={24} aria-label="生成"><BallIcon /></IconButton>
            <IconButton $w={24} aria-label="删除"><TrashIcon /></IconButton>
            <Labelled>
              <TextButton><ListPlus /><span>选择标准</span></TextButton>
              <TextButton><ListPlus /><span>手动地</span></TextButton>
              <TextButton><NodeIcon /><span>打开</span></TextButton>
              <TextButton><NodeIcon /><span>更改的</span></TextButton>
              <TextButton><NodeIcon /><span>已维护</span></TextButton>
              <TextButton><span>组织级别...</span></TextButton>
            </Labelled>
            <IconButton $w={44} aria-label="图例"><LegendIcon /></IconButton>
            <TextButton><InfoIcon /><span>信息</span></TextButton>
          </AppBar>
          <Body>
            <AuthList />
            <Bar $vertical>
              <Arrow dir="up" label="上" />
              <Arrow dir="down" label="下" />
              <Space $size={260} />
              <Thumb $vertical $size={112}><Grip /></Thumb>
            </Bar>
          </Body>
          <Bar>
            <Arrow dir="left" label="左" />
            <Arrow dir="right" label="右" />
            <Space $size={2} />
            <Thumb $size={714}><Grip /></Thumb>
          </Bar>
        </Work>
        <StatusBar>
          <span />
          <SapLogo />
          <StatusRight>
            <svg width="16" height="12"><path d="M1.500 1.500L8 6L1.500 10.500Z" fill="#b8d8ec" stroke="#486c94" /></svg>
            <StatusCell $w={57}>SU01<Tri dir="down" size={5} fill="#2c3c68" /></StatusCell>
            <StatusCell $w={57}>sapecc6</StatusCell>
            <StatusCell $w={32}>INS</StatusCell>
            <StatusCell $w={26} />
            <StatusCell $w={26} />
          </StatusRight>
        </StatusBar>
        <WindowTab>
          <svg width="100" height="28">
            <defs>
              <linearGradient id="tab" x2="0" y2="1"><stop offset="0" stopColor="#5478c4" /><stop offset="1" stopColor="#26468c" /></linearGradient>
            </defs>
            <path d="M1 0V18Q1 25 8 25H66Q73 25 79 18Q88 6 98 0Z" fill="url(#tab)" stroke="#182c5c" strokeWidth="1.500" />
          </svg>
          <WindowButtons>
            <WindowButton aria-label="最小化"><svg width="10" height="10"><path d="M0 8.500H10" stroke="#dfe9f8" strokeWidth="2" /></svg></WindowButton>
            <WindowButton aria-label="还原"><svg width="11" height="11" fill="none" stroke="#dfe9f8"><path d="M3.500 3V.5H10.500V6.500H8M.5 4.500H7.500V10.500H.5ZM3 7.500H5" /></svg></WindowButton>
            <WindowButton aria-label="关闭"><svg width="8" height="8" stroke="#dfe9f8" strokeWidth="2"><path d="M1 1L7 7M7 1L1 7" /></svg></WindowButton>
          </WindowButtons>
        </WindowTab>
        <DefineValues />
        <Pointer width="13" height="20"><path d="M1 1V15L4.500 12L7 18L10 16.500L7.500 11H12Z" fill="#fff" stroke="#33333c" /></Pointer>
      </Main>
      <Side />
      <RecorderPanel />
    </Desktop>
  );
}
